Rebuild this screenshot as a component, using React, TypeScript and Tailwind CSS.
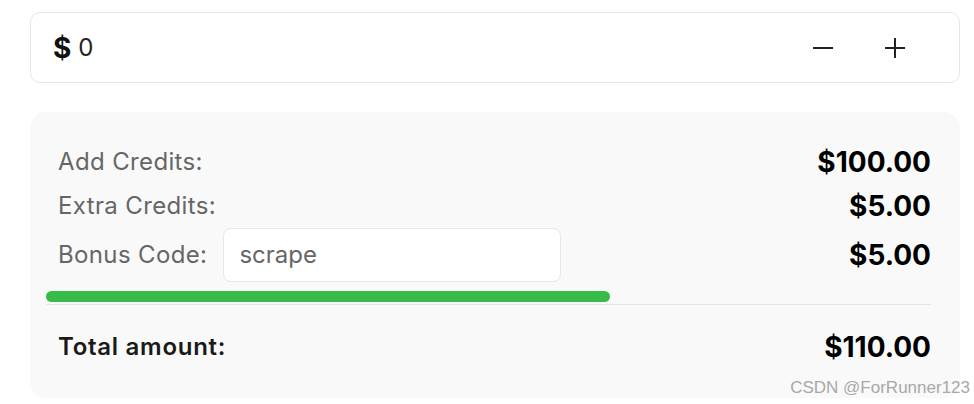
import React from 'react'

function Row(props: { label: React.ReactNode; amount: string; className?: string }) {
  const { label, amount, className } = props
  return (
    <div className={`flex items-center justify-between ${className ?? ''}`}>
      {label}
      <span className="text-[28px] font-bold text-black">{amount}</span>
    </div>
  )
}

export default function App() {
  return (
    <div className="relative w-[974px] h-[404px] bg-white font-['Inter',sans-serif] overflow-hidden">
      <div className="pl-[30px] pr-[14px] pt-[12px]">
        <div className="flex h-[71px] items-center rounded-[10px] border border-[#e6e6e6] bg-white pl-[22px] pr-[52px]">
          <span className="text-[28px] font-bold text-[#111] leading-none">$</span>
          <span className="ml-[7px] flex-1 text-[24px] text-[#222] leading-none">0</span>
          <button className="flex h-[24px] w-[24px] items-center justify-center">
            <svg width="20" height="20" viewBox="0 0 20 20">
              <path d="M0 10h20" stroke="#222" strokeWidth="2" />
            </svg>
          </button>
          <button className="ml-[48px] flex h-[24px] w-[24px] items-center justify-center">
            <svg width="20" height="20" viewBox="0 0 20 20">
              <path d="M0 10h20M10 0v20" stroke="#222" strokeWidth="2" />
            </svg>
          </button>
        </div>

        <div className="mt-[29px] rounded-[16px] bg-[#f9f9f9] pl-[28px] pr-[29px] pt-[32px] pb-[33px]">
          <Row
            className="h-[36px]"
            label={<span className="text-[24px] text-[#666] tracking-[0.015em]">Add Credits:</span>}
            amount="$100.00"
          />
          <Row
            className="mt-[8px] h-[36px]"
            label={<span className="text-[24px] text-[#666] tracking-[0.015em]">Extra Credits:</span>}
            amount="$5.00"
          />
          <Row
            className="mt-[4px] h-[54px]"
            label={
              <div className="flex items-center">
                <span className="text-[24px] text-[#666] tracking-[0.015em]">Bonus Code:</span>
                <div className="ml-[16px] flex h-[54px] w-[338px] items-center rounded-[8px] border border-[#e8e8ec] bg-white px-[15px] text-[24px] text-[#666]">
                  scrape
                </div>
              </div>
            }
            amount="$5.00"
          />
          <div className="-ml-[12px] mt-[9px]">
            <div className="h-[11px] w-[564px] rounded-full bg-[#37bb4b]" />
            <div className="mt-[2px] border-t border-[#e4e4e4]" />
          </div>
          <Row
            className="mt-[24px] h-[36px]"
            label={<span className="text-[24px] font-semibold text-[#1a1a1a] tracking-[0.03em]">Total amount:</span>}
            amount="$110.00"
          />
        </div>
      </div>

      <span className="absolute right-[4px] bottom-[8px] text-[17px] leading-none text-[#a8a8a8] font-['Liberation_Sans',sans-serif]">
        CSDN @ForRunner123
      </span>
    </div>
  )
}
